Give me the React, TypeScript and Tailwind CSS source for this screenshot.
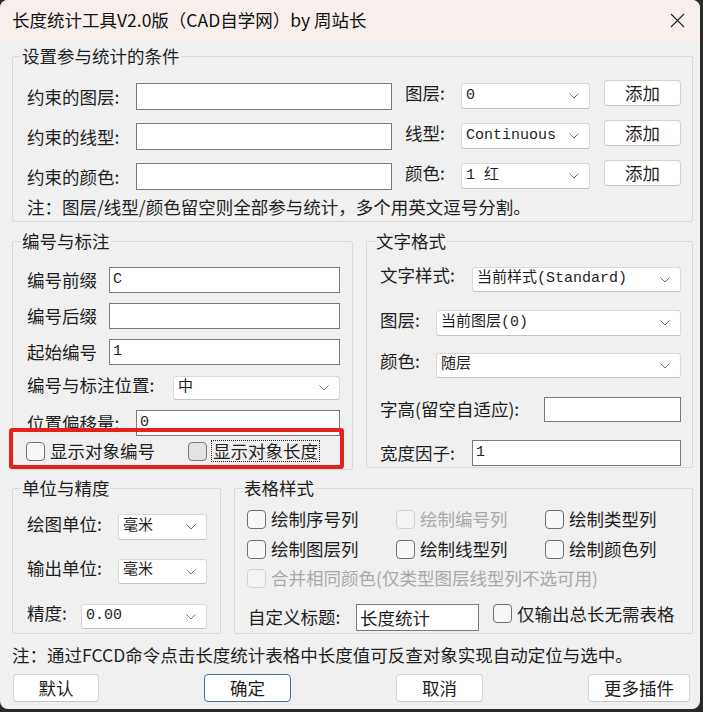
import React from "react";

const mono = "font-['Liberation_Mono','Noto_Sans_CJK_SC',monospace] text-[15px]";

function Chevron() {
    return (
        <svg width="10" height="6" viewBox="0 0 10 6" className="shrink-0">
            <path d="M0.5 0.5 L5 5 L9.5 0.5" fill="none" stroke="#707070" strokeWidth="1" />
        </svg>
    );
}

function Input({ className = "", value = "", cjkValue = false }: { className?: string; value?: string; cjkValue?: boolean }) {
    return (
        <div className={"flex items-center border border-[#7a7a7a] bg-white pl-[3px] shrink-0 " + className}>
            <span className={cjkValue ? "leading-[20px]" : mono}>{value}</span>
        </div>
    );
}

function Select({ className = "", value = "" }: { className?: string; value?: string }) {
    return (
        <div className={"flex items-center justify-between rounded-[3px] border border-[#d9d9d9] border-b-[#c2c2c2] bg-white pl-[4px] pr-[10px] shrink-0 " + className}>
            <span className={mono}>{value}</span>
            <Chevron />
        </div>
    );
}

function Btn({ className = "", children }: { className?: string; children: React.ReactNode }) {
    return (
        <div className={"flex items-center justify-center rounded-[4px] border border-[#d3d3d3] border-b-[#c4c4c4] bg-white leading-[20px] shrink-0 " + className}>
            {children}
        </div>
    );
}

function Check({ label, disabled = false, hover = false, focus = false }: { label: string; disabled?: boolean; hover?: boolean; focus?: boolean }) {
    return (
        <div className="flex items-center">
            <span
                className={
                    "w-[19px] h-[19px] rounded-[4px] border shrink-0 " +
                    (disabled ? "border-[#d2d2d2] bg-[#f3f3f3]" : hover ? "border-[#7a7a7a] bg-[#e3e3e3]" : "border-[#6f6f6f] bg-[#f7f7f7]")
                }
            />
            {focus ? (
                <span className="ml-[4px] px-[1px] border border-dotted border-[#222] leading-[20px]">{label}</span>
            ) : (
                <span className={"ml-[5px] leading-[20px] " + (disabled ? "text-[#a9a9a9]" : "")}>{label}</span>
            )}
        </div>
    );
}

function Group({ title, className = "", children }: { title: string; className?: string; children: React.ReactNode }) {
    return (
        <fieldset className={"m-0 p-0 min-w-0 border border-[#d8d8d8] rounded-[2px] shrink-0 " + className}>
            <legend className="ml-[8px] px-[1px] leading-[20px]">{title}</legend>
            {children}
        </fieldset>
    );
}

export default function App() {
    return (
        <div className="w-[703px] h-[712px] bg-[#2a2a2a]">
            <div className="relative w-[700px] h-[709px] rounded-[8px] overflow-hidden bg-[#f0f0f0] flex flex-col text-[17.5px] text-[#1e1e1e] font-['Noto_Sans_CJK_SC',sans-serif]">
                {/* Title bar */}
                <div className="h-[40px] shrink-0 bg-[#f6efec] flex items-center justify-between pl-[12px] pr-[15px]">
                    <span className="leading-[24px] text-[#111]">长度统计工具V2.0版（CAD自学网）by 周站长</span>
                    <svg width="15" height="15" viewBox="0 0 15 15">
                        <path d="M1 1 L14 14 M14 1 L1 14" stroke="#222" strokeWidth="1.1" fill="none" />
                    </svg>
                </div>

                <div className="flex flex-col pl-[12px]">
                    {/* Conditions */}
                    <Group title="设置参与统计的条件" className="mt-[6px] w-[681px] h-[176px]">
                        <div className="pt-[17px] pl-[14px]">
                            {[
                                ["约束的图层:", "图层:", "0"],
                                ["约束的线型:", "线型:", "Continuous"],
                                ["约束的颜色:", "颜色:", "1 红"],
                            ].map(([l, r, v], i) => (
                                <div key={l} className={"flex items-start h-[27px] " + (i > 0 ? "mt-[13px]" : "")}>
                                    <span className="w-[109px] leading-[27px] shrink-0">{l}</span>
                                    <Input className="w-[256px] h-[27px]" />
                                    <span className="ml-[13px] w-[56px] leading-[20px] shrink-0">{r}</span>
                                    <Select className="w-[129px] h-[26px]" value={v} />
                                    <Btn className="ml-[14px] -mt-[3px] w-[77px] h-[26px]">添加</Btn>
                                </div>
                            ))}
                            <div className="mt-[7px] leading-[20px]">注：图层/线型/颜色留空则全部参与统计，多个用英文逗号分割。</div>
                        </div>
                    </Group>

                    <div className="flex items-start gap-[13px] mt-[9px]">
                        {/* Numbering */}
                        <Group title="编号与标注" className="w-[341px] h-[239px]">
                            <div className="pt-[16px] pl-[14px]">
                                <div className="flex items-center h-[26px]">
                                    <span className="w-[82px] shrink-0">编号前缀</span>
                                    <Input className="w-[231px] h-[26px]" value="C" />
                                </div>
                                <div className="flex items-center h-[26px] mt-[10px]">
                                    <span className="w-[82px] shrink-0">编号后缀</span>
                                    <Input className="w-[231px] h-[26px]" />
                                </div>
                                <div className="flex items-center h-[26px] mt-[10px]">
                                    <span className="w-[82px] shrink-0">起始编号</span>
                                    <Input className="w-[231px] h-[26px]" value="1" />
                                </div>
                                <div className="flex items-center h-[24px] mt-[11px]">
                                    <span className="w-[146px] shrink-0 -mt-[6px]">编号与标注位置:</span>
                                    <Select className="w-[167px] h-[24px]" value="中" />
                                </div>
                                <div className="flex items-center h-[26px] mt-[10px]">
                                    <span className="w-[109px] shrink-0">位置偏移量:</span>
                                    <Input className="w-[204px] h-[26px]" value="0" />
                                </div>
                                <div className="flex items-center h-[20px] mt-[5px] -ml-[1px]">
                                    <Check label="显示对象编号" />
                                    <div className="ml-[33px]">
                                        <Check label="显示对象长度" hover focus />
                                    </div>
                                </div>
                            </div>
                        </Group>

                        {/* Text format */}
                        <Group title="文字格式" className="w-[327px] h-[237px]">
                            <div className="pt-[16px] pl-[13px]">
                                <div className="flex items-center h-[25px]">
                                    <span className="w-[92px] shrink-0 -mt-[8px]">文字样式:</span>
                                    <Select className="w-[209px] h-[25px]" value="当前样式(Standard)" />
                                </div>
                                <div className="flex items-center h-[26px] mt-[18px]">
                                    <span className="w-[56px] shrink-0 -mt-[5px]">图层:</span>
                                    <Select className="w-[245px] h-[26px]" value="当前图层(0)" />
                                </div>
                                <div className="flex items-center h-[25px] mt-[17px]">
                                    <span className="w-[56px] shrink-0 -mt-[8px]">颜色:</span>
                                    <Select className="w-[245px] h-[25px]" value="随层" />
                                </div>
                                <div className="flex items-center h-[25px] mt-[19px]">
                                    <span className="w-[164px] shrink-0">字高(留空自适应):</span>
                                    <Input className="w-[137px] h-[25px]" />
                                </div>
                                <div className="flex items-center h-[26px] mt-[18px]">
                                    <span className="w-[92px] shrink-0">宽度因子:</span>
                                    <Input className="w-[209px] h-[26px]" value="1" />
                                </div>
                            </div>
                        </Group>
                    </div>

                    <div className="flex items-start gap-[13px] mt-[8px]">
                        {/* Units */}
                        <Group title="单位与精度" className="w-[209px] h-[156px]">
                            <div className="pt-[16px] pl-[14px]">
                                <div className="flex items-center h-[26px]">
                                    <span className="w-[91px] shrink-0 -mt-[6px]">绘图单位:</span>
                                    <Select className="w-[89px] h-[26px]" value="毫米" />
                                </div>
                                <div className="flex items-center h-[25px] mt-[19px]">
                                    <span className="w-[91px] shrink-0 -mt-[6px]">输出单位:</span>
                                    <Select className="w-[89px] h-[25px]" value="毫米" />
                                </div>
                                <div className="flex items-center h-[25px] mt-[20px]">
                                    <span className="w-[54px] shrink-0 -mt-[7px]">精度:</span>
                                    <Select className="w-[126px] h-[25px]" value="0.00" />
                                </div>
                            </div>
                        </Group>

                        {/* Table style */}
                        <Group title="表格样式" className="w-[459px] h-[156px]">
                            <div className="pt-[11px] pl-[12px]">
                                <div className="grid grid-cols-[149px_149px_149px] h-[20px]">
                                    <Check label="绘制序号列" />
                                    <Check label="绘制编号列" disabled />
                                    <Check label="绘制类型列" />
                                </div>
                                <div className="grid grid-cols-[149px_149px_149px] h-[20px] mt-[10px]">
                                    <Check label="绘制图层列" />
                                    <Check label="绘制线型列" />
                                    <Check label="绘制颜色列" />
                                </div>
                                <div className="h-[20px] mt-[9px]">
                                    <Check label="合并相同颜色(仅类型图层线型列不选可用)" disabled />
                                </div>
                                <div className="flex items-center h-[27px] mt-[16px]">
                                    <span className="w-[109px] shrink-0 pl-[1px]">自定义标题:</span>
                                    <Input className="w-[123px] h-[27px]" value="长度统计" cjkValue />
                                    <div className="ml-[14px] -mt-[8px]">
                                        <Check label="仅输出总长无需表格" />
                                    </div>
                                </div>
                            </div>
                        </Group>
                    </div>

                    <div className="mt-[11px] leading-[20px]">注：通过FCCD命令点击长度统计表格中长度值可反查对象实现自动定位与选中。</div>

                    <div className="flex mt-[9px] h-[28px]">
                        <Btn className="ml-[1px] w-[86px] h-[28px]">默认</Btn>
                        <Btn className="ml-[105px] w-[87px] h-[28px] !border-[#4f6f92]">确定</Btn>
                        <Btn className="ml-[105px] w-[87px] h-[28px]">取消</Btn>
                        <Btn className="ml-[105px] w-[102px] h-[28px]">更多插件</Btn>
                    </div>
                </div>

                {/* red annotation box */}
                <div className="absolute left-[9px] top-[428px] w-[335px] h-[41px] border-[4px] border-[#e3221c] rounded-[3px] pointer-events-none" />
            </div>
        </div>
    );
}
